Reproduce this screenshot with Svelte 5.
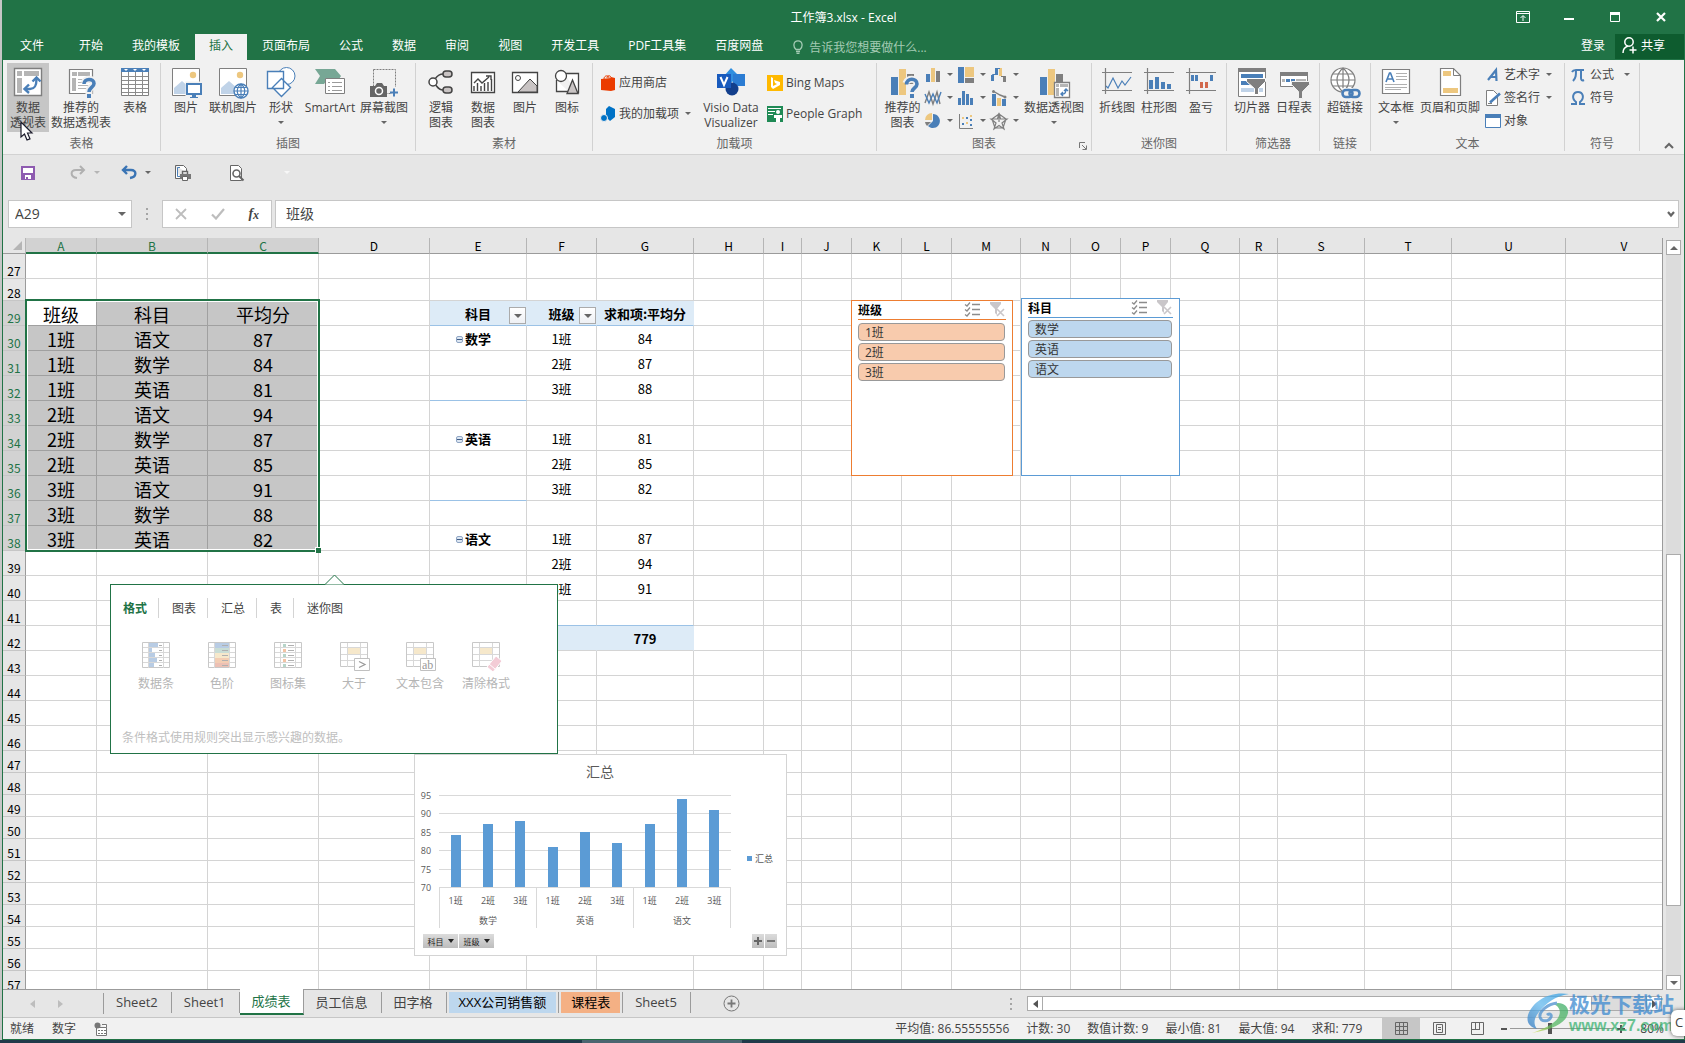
<script lang="ts">
    type Column = { name: string, width: number }
    type Cell = { text?: string, kind?: string, filter?: boolean, toggle?: boolean }
    type Tool = { icon: string, lines: string[], menu?: boolean, active?: boolean }
    type Group = { id: string, label: string, tools: Tool[] }

    const icons: Record<string, string> = {
        pivot: `<path fill="#fff" stroke="#7f7f7f" stroke-width="1.4" d="M2.5 1.5h27v27h-27z"/><path fill="#b5b5b5" d="M5 4h5v5H5zM12 4h15v5H12zM5 11h5v15H5z"/><path fill="none" stroke="#4a7fb8" stroke-width="2.4" d="M14 22h4c5 0 6.500-3 6.500-10"/><path fill="none" stroke="#4a7fb8" stroke-width="2.400" d="M20.500 14.500l4-4 4 4M17 17.500l-4.500 4.500 4.500 4"/>`,
        recpivot: `<path fill="#fff" stroke="#7f7f7f" stroke-width="1.2" d="M4.500 2.500h23v24h-23z"/><path fill="#b5b5b5" d="M7 5h5v4H7zM13 5h12v4H13zM7 11h4v13H7z"/><path stroke="#b5b5b5" d="M13 12.500h12M13 15.500h12M13 18.500h12M13 21.500h12"/><path fill="none" stroke="#f1f1f1" stroke-width="7" d="M19 16c1-5 10-5 10 0 0 4-5 4-5 8v4"/><path fill="none" stroke="#4a7fb8" stroke-width="3.6" d="M19 17c0-6 10-6 10-.5 0 4-5 4-5 8.500"/><path fill="#4a7fb8" d="M22 27h4v4h-4z"/>`,
        table: `<path fill="#fff" stroke="#7f7f7f" d="M2.500 1.500h27v27h-27z"/><path fill="#4a7fb8" d="M2 1h28v4H2z"/><path fill="#fff" d="M5 2h4l-2 2zM14 2h4l-2 2zM23 2h4l-2 2z"/><path stroke="#8c8c8c" d="M9.500 5v24M16.500 5v24M23.500 5v24M3 9.500h26M3 13.500h26M3 17.500h26M3 21.500h26M3 25.500h26"/>`,
        picture: `<path fill="#fff" stroke="#7f7f7f" d="M2.500 1.500h27v27h-27z"/><circle cx="23" cy="8" r="3.200" fill="#edc77f"/><path fill="#c0d3e8" d="M4 27v-6l8-7 8 7v6z"/><path fill="#fff" stroke="#f1f1f1" stroke-width="3" d="M17 16h15v12H17z"/><path fill="#fff" stroke="#4a7fb8" stroke-width="2" d="M17 17h14v10H17z"/><path fill="#4a7fb8" d="M22 28h4v2h-4zM20 30h8v1h-8z"/>`,
        online: `<path fill="#fff" stroke="#7f7f7f" d="M2.500 1.500h27v27h-27z"/><circle cx="23" cy="8" r="3.200" fill="#edc77f"/><path fill="#c0d3e8" d="M4 27v-6l8-7 8 7v6z"/><circle cx="24" cy="24" r="7" fill="#fff" stroke="#4a7fb8" stroke-width="1.400"/><path fill="none" stroke="#4a7fb8" stroke-width="1.200" d="M17 24h14M24 17v14M18.500 20.500h11M18.500 27.500h11M24 17c-5 4-5 10 0 14M24 17c5 4 5 10 0 14"/>`,
        shapes: `<circle cx="21.500" cy="9" r="8.500" fill="#fff" stroke="#4a7fb8"/><path fill="#fff" stroke="#4a7fb8" stroke-width="1.400" d="M2.500 4.500h16v17h-16zM16.500 11.500l9 9-9 9-9-9z"/>`,
        smartart: `<path fill="#77a795" d="M1 2h20l6 7-2 3H14l-4 5H1l5-8z"/><path fill="#fff" stroke="#7f7f7f" d="M11.500 11.500h19v15h-19z"/><path stroke="#9a9a9a" d="M14 15.500h2M18 15.500h10M14 19.500h2M18 19.500h10M14 23.500h2M18 23.500h10"/>`,
        screenshot: `<path fill="none" stroke="#7f7f7f" stroke-dasharray="2 1" d="M5.500 2.500h22v24h-22z"/><path fill="#666" d="M2 19h5l2-3h5l2 3h3v11H2z"/><circle cx="11" cy="24" r="3.500" fill="#666" stroke="#fff" stroke-width="1.500"/><path stroke="#f1f1f1" stroke-width="5" d="M26 20v9"/><path stroke="#4a7fb8" stroke-width="2" d="M22 25.500h8M26 21.500v8"/>`,
        logic: `<g fill="#fff" stroke="#444" stroke-width="1.500"><path fill="none" d="M18 7c-8 0-7 8-13 8 7 0 6 8 13 8"/><circle cx="8" cy="15" r="4"/><rect x="18" y="4" width="9" height="6" rx="3" fill="#c9c4c4"/><rect x="18" y="20" width="9" height="6" rx="3" fill="#c9c4c4"/></g>`,
        datachart: `<path fill="#fff" stroke="#444" stroke-width="1.300" d="M4.500 5.500h23v20h-23z"/><path fill="none" stroke="#444" stroke-width="1.400" d="M7 24v-5M10.500 24v-8M14 24v-5M17.500 24v-8M21 24v-9M24.500 24v-12M7 16l4-4 4 4 7-6M19 9h5v4"/>`,
        pic2: `<path fill="#fff" stroke="#444" stroke-width="1.300" d="M3.500 5.500h25v20h-25z"/><circle cx="9" cy="11" r="2.500" fill="none" stroke="#444"/><path fill="#c9c4c4" stroke="#444" d="M9 25l12-13 7 7v6z"/>`,
        symbols: `<path fill="#fff" stroke="#444" stroke-width="1.300" d="M5.500 13v11.500h12M13 6.500h14.500v20"/><circle cx="10" cy="9" r="5.500" fill="#fff" stroke="#444" stroke-width="1.300"/><path fill="#c9c4c4" stroke="#444" stroke-width="1.300" d="M21.500 13l5.500 13.500H16z"/>`,
        visio: `<path fill="#2f8fe0" d="M16 1l8 8-8 7-7-7z"/><path fill="#2b7cd3" d="M18 7h12v12H18z"/><circle cx="17" cy="22" r="6.500" fill="#123f8c"/><path fill="#185abd" d="M2 7h14v14H2z"/><path fill="none" stroke="#fff" stroke-width="2" d="M5.500 10l3.500 8 3.500-8"/>`,
        recchart: `<path fill="#4a7fb8" d="M4 10h7v18H4z"/><path fill="#edc77f" d="M12 2h7v26h-7z"/><path fill="#7f7f7f" d="M20 7h7v10h-7z"/><path fill="none" stroke="#f1f1f1" stroke-width="7" d="M19 16c1-5 11-5 11 0 0 4-5 4-5 8v6"/><path fill="none" stroke="#4a7fb8" stroke-width="3.600" d="M19.500 17.500c0-7 10.500-7 10.500-.5 0 4-5 4-5 8"/><path fill="#4a7fb8" d="M23 27h4v4h-4z"/>`,
        pivotchart: `<path fill="#4a7fb8" d="M2 10h7v18H2z"/><path fill="#edc77f" d="M10 2h7v26h-7z"/><path fill="#7f7f7f" d="M18 7h7v10h-7z"/><path fill="#fff" stroke="#7f7f7f" stroke-width="1.300" d="M16.500 15.500h15v15h-15z"/><path fill="#b5b5b5" d="M18 17h3v3h-3zM22 17h8v3h-8zM18 21h3v8h-3z"/><path fill="none" stroke="#4a7fb8" stroke-width="1.400" d="M23 27h2c2 0 3-1 3-5M26 24l2-2 2 2M25 25l-2 2 2 2"/>`,
        sparkline: `<path stroke="#7f7f7f" stroke-width="1.200" d="M1 5.500h30M1 23.500h30M4.500 1v26"/><path fill="none" stroke="#4a7fb8" stroke-width="1.200" d="M5 19l2 2 5-10 5 10 4-7 3 4 6-8"/>`,
        sparkcol: `<path stroke="#7f7f7f" stroke-width="1.200" d="M1 5.500h30M1 23.500h30M4.500 1v26"/><path fill="#4a7fb8" d="M6 13h4v9H6zM12 10h4v12h-4zM18 15h4v7h-4zM24 17h4v5h-4z"/>`,
        winloss: `<path stroke="#7f7f7f" stroke-width="1.200" d="M1 5.500h30M1 23.500h30M4.500 1v26"/><path fill="#4a7fb8" d="M6 8h3v6H6zM10 8h3v6h-3zM25 8h3v6h-3z"/><path fill="#d2694c" d="M15 15h3v6h-3zM20 15h3v6h-3z"/>`,
        slicer: `<path fill="#fff" stroke="#7f7f7f" d="M2.500 1.500h27v28h-27z"/><path fill="#7f7f7f" d="M2 1h28v4H2z"/><path fill="#4a7fb8" d="M5 7h22v4H5zM5 14h9v4H5z"/><path fill="#c0d3e8" d="M5 21h22v4H5z"/><path fill="#7f7f7f" stroke="#fff" d="M10.500 11.500h19v3l-7 7v6h-4v-6l-8-7z"/>`,
        timeline: `<path fill="#fff" stroke="#7f7f7f" d="M2.500 5.500h27v14h-27z"/><path fill="#7f7f7f" d="M2 5h28v4H2z"/><path fill="#b5b5b5" d="M4 12h3v3H4zM18 12h10v3H18z"/><path fill="#4a7fb8" d="M8 12h4v3H8zM13 12h4v3h-4z"/><path fill="#7f7f7f" stroke="#f1f1f1" d="M13.500 14.500h18v3l-7 7v7h-4v-7l-7-7z"/>`,
        link: `<g fill="#fff" stroke="#7f7f7f" stroke-width="1.200"><circle cx="14" cy="13" r="12"/><path fill="none" d="M2 13h24M14 1v24M4 7h20M4 19h20M14 1c-8 7-8 17 0 24M14 1c8 7 8 17 0 24"/></g><path fill="#f1f1f1" d="M13 21h19v11H13z"/><g fill="none" stroke="#4a7fb8" stroke-width="2.600"><rect x="13.500" y="23" width="10" height="7" rx="3.500"/><rect x="20.500" y="23" width="10" height="7" rx="3.500"/></g>`,
        textbox: `<path fill="#fff" stroke="#7f7f7f" stroke-width="1.200" d="M2.500 2.500h27v24h-27z"/><path fill="none" stroke="#4a7fb8" stroke-width="1.600" d="M6 15l3.500-9h1l3.500 9M7.500 12h5"/><path stroke="#b0b0b0" d="M16 6.500h11M16 9.500h11M16 12.500h11M5 17.500h22M5 20.500h22M5 22.500h16"/>`,
        header: `<path fill="#fff" stroke="#7f7f7f" stroke-width="1.200" d="M6.500 1.500h13l7 7v20h-20z"/><path fill="none" stroke="#7f7f7f" d="M19.500 1.500v7h7"/><path fill="#edc77f" d="M9 4h8v5H9zM9 21h15v5H9z"/>`,
        store: `<path fill="#eb3c00" d="M1 4l10-1v-1l4 1v12l-4 1-10-1z"/><path fill="none" stroke="#eb3c00" d="M4 4c0-4 5-4 5-1M7 3c0-3 4-3 4 0"/>`,
        addins: `<path fill="#0072c6" d="M9 0l6 3v8l-5 4-4-4V3z"/><circle cx="4" cy="12" r="3.500" fill="#0072c6" stroke="#f1f1f1"/>`,
        bing: `<path fill="#ffb900" d="M0 0h16v16H0z"/><path fill="#fff" d="M4 2l2 1v8l4-2-2-1-1-3 6 2v3l-7 4-2-2z"/>`,
        people: `<path fill="#1f8a55" d="M0 0h16v16H0z"/><path stroke="#fff" d="M1 2.500h13M1 5.500h7M1 8.500h5"/><circle cx="11" cy="6" r="2" fill="#fff"/><path fill="#fff" d="M7 9h8v3h-2v4H9v-4H7z"/>`,
        col: `<path fill="#4a7fb8" d="M1 7h4v8H1z"/><path fill="#edc77f" d="M6 1h4v14H6z"/><path fill="#7f7f7f" d="M11 4h4v11h-4z"/>`,
        tree: `<path fill="#4a7fb8" d="M0 0h6v16H0z"/><path fill="#edc77f" d="M7 0h9v10H7z"/><path fill="#7f7f7f" d="M7 11h9v5H7z"/>`,
        waterfall: `<path fill="#4a7fb8" d="M0 8h3v6H0zM4 1h3v7H4z"/><path fill="#edc77f" d="M8 1h3v8H8z"/><path fill="#7f7f7f" d="M12 9h3v6h-3z"/><path fill="none" stroke="#4a7fb8" d="M1.500 8V7.500h3M5 1.500h4"/><path stroke="#777" d="M10 9.500h4"/>`,
        line: `<path fill="none" stroke="#7f7f7f" stroke-width="1.400" d="M0 13l4-11 4 12 4-12 3 12"/><path fill="none" stroke="#4a7fb8" stroke-width="1.400" d="M0 4l4 9L8 4l4 9 4-11"/>`,
        stat: `<path fill="#4a7fb8" d="M0 8h3v7H0zM4 1h3v14H4zM8 4h3v11H8zM12 8h3v7h-3z"/>`,
        combo: `<path fill="#4a7fb8" d="M1 4h4v12H1z"/><path fill="#edc77f" d="M6 8h4v8H6z"/><path fill="#4a7fb8" d="M11 9h4v7h-4z"/><path fill="none" stroke="#7f7f7f" stroke-width="1.400" d="M2 1l7 4 5 2"/><circle cx="2.500" cy="1.500" r="1.500" fill="#7f7f7f"/><circle cx="14" cy="7" r="1.500" fill="#7f7f7f"/>`,
        pie: `<path fill="#4a7fb8" d="M8 8V1a7 7 0 1 1-5 12z"/><path fill="#edc77f" d="M7 0v7H0a7 7 0 0 1 7-7z"/><path fill="#7f7f7f" d="M0 9h6l-4 4a7 7 0 0 1-2-4z"/>`,
        scatter: `<path fill="none" stroke="#7f7f7f" d="M1.500 1v14.500H15"/><path fill="#4a7fb8" d="M4 10h2v2H4zM8 4h2v2H8zM12 6h2v2h-2zM12 11h2v2h-2z"/><path fill="#edc77f" d="M4 4h2v2H4zM8 9h2v2H8zM12 2h2v2h-2z"/>`,
        radar: `<path fill="none" stroke="#7f7f7f" stroke-width="1.200" d="M8 0l1.500 6 6.500 0-5 4 2 6-5-3.500L3 16l2-6-5-4h6.500zM8 1l7 5-3 9H4L1 6zM8 1v8"/>`,
        wordart: `<path fill="none" stroke="#4a7fb8" stroke-width="2.200" d="M3 13L11 3l.5 11M5.500 10h6"/>`,
        sign: `<path fill="#fff" stroke="#7f7f7f" d="M1.500.5h7l4 4v11h-11z"/><path stroke="#4a7fb8" stroke-width="2.600" d="M5 12.500L15 3.500"/><path stroke="#7f7f7f" d="M3 13.500h4"/>`,
        object: `<path fill="#fff" stroke="#4a7fb8" d="M.5 1.500h15v13H.5z"/><path fill="#4a7fb8" d="M0 1h16v4H0z"/>`,
        pi: `<path fill="none" stroke="#4a7fb8" stroke-width="2" d="M1 5c1-2 2-2 4-2h8M5 3c0 5 0 8-3 11M10 3v8c0 2 1 3 3 2"/>`,
        omega: `<path fill="none" stroke="#4a7fb8" stroke-width="2" d="M0 14h5v-2C0 8 2 2 7 2s7 6 2 10v2h5"/>`,
        save: `<path fill="#8e5bb0" d="M0 1h14v14H0z"/><path fill="#fff" d="M2 3h10v5H2zM4 10h6v4H7v-2H5v2H4z"/>`,
        redo: `<path fill="none" stroke="#b0b0b0" stroke-width="2" d="M6 13c-7-1-7-8-1-8h8M9 1l4 4-4 4"/>`,
        undo: `<path fill="none" stroke="#3a74b4" stroke-width="2.400" d="M8 13c7-1 7-8 1-8H1M5 1L1 5l4 4"/>`,
        print: `<path fill="#fff" stroke="#666" d="M.5.500h8l3 3v4M.5.500v13H5"/><path fill="none" stroke="#4a7fb8" d="M5 2.500H2.500v9H5"/><path fill="#fff" stroke="#666" stroke-width="1.400" d="M7.500 6.500h5v3h-5z"/><path fill="#777" d="M5 9h11v5H5z"/><path fill="#fff" stroke="#666" d="M7.500 11.500h5v4h-5z"/>`,
        preview: `<path fill="#fff" stroke="#666" d="M.5.500h8l3 3v12H.5z"/><circle cx="6.500" cy="8.500" r="3.500" fill="#fff" stroke="#666" stroke-width="1.600"/><path stroke="#666" stroke-width="2" d="M9 11l4.500 4.500"/>`,
        multi: `<path fill="none" stroke="#8c8c8c" stroke-width="1.300" d="M0 2.500l2 1.500 3-3.500M0 7.500l2 1.500 3-3.500M0 12.500l2 1.500 3-3.500M7 2.500h8M7 7.500h8M7 12.500h8"/>`,
        clear: `<path fill="#c9c6c9" d="M0 0h11v2L7 7v6L5 11V7L0 2z"/><path stroke="#c9c6c9" stroke-width="1.600" d="M7 7l7 7M14 7l-7 7"/>`,
    }

    const cells = `<path fill="#fff" stroke="#c8c8c8" d="M.5.500h27v25H.5z"/><path stroke="#d8d8d8" d="M6.500 1v25M21.500 1v25M1 5.500h26M1 10.500h26M1 15.500h26M1 20.500h26"/>`
    const small = `<path fill="#fff" stroke="#c8c8c8" d="M.5.500h27v24H.5z"/><path stroke="#d8d8d8" d="M7.500 1v24M20.500 1v24M1 5.500h26M1 12.500h26M1 18.500h26"/><path fill="#f6e8cb" d="M8 6h12v6H8z"/>`
    const analysis = [
        { label: '数据条', art: cells + `<path fill="#b8cce4" d="M7 1h9v4H7zM7 6h3v4H7zM7 11h6v4H7zM7 16h8v4H7zM7 21h5v4H7z"/><path stroke="#b0b0b0" d="M17 3.500h3M17 8.500h3M17 13.500h3M17 18.500h3M17 23.500h3"/>` },
        { label: '色阶', art: cells + `<path fill="#b8cce4" d="M7 1h14v5H7z"/><path fill="#c9ddd5" d="M7 6h14v5H7z"/><path fill="#f6e8cb" d="M7 11h14v5H7z"/><path fill="#f3cdb3" d="M7 16h14v5H7z"/><path fill="#ecc0b4" d="M7 21h14v4H7z"/><path stroke="#b0b0b0" d="M14 3.500h6M14 8.500h6M14 13.500h6M14 18.500h6M14 23.500h6"/>` },
        { label: '图标集', art: cells + `<path stroke="#b0b0b0" d="M14 3.500h6M14 8.500h6M14 13.500h6M14 18.500h6M14 23.500h6"/><path fill="#b7d5c9" d="M9 2h3v3H9zM9 12h3v3H9zM9 22h3v3H9z"/><path fill="#f3c3a3" d="M9 7h3v3H9zM9 17h3v3H9z"/>` },
        { label: '大于', art: small + `<path fill="#fff" stroke="#c0c0c0" d="M14.500 16.500h15v12h-15z"/><path fill="none" stroke="#999" stroke-width="1.200" d="M19 19.500l6 3-6 3"/>` },
        { label: '文本包含', art: small + `<path fill="#fff" stroke="#c0c0c0" d="M14.500 16.500h15v12h-15z"/><text x="16" y="27" font-size="12" fill="#999" font-family="Liberation Serif">ab</text>` },
        { label: '清除格式', art: small + `<path fill="#f3ccd6" stroke="#fff" d="M15 25l9-11 6 5-9 11z"/><path stroke="#fff" d="M17 22l6 5"/>` },
    ]

    const ribbonTabs = ['文件', '开始', '我的模板', '插入', '页面布局', '公式', '数据', '审阅', '视图', '开发工具', 'PDF工具集', '百度网盘']
    let activeTab = $state('插入')

    const groups: Group[] = [
        { id: 'tables', label: '表格', tools: [
            { icon: 'pivot', lines: ['数据', '透视表'], active: true },
            { icon: 'recpivot', lines: ['推荐的', '数据透视表'] },
            { icon: 'table', lines: ['表格'] },
        ] },
        { id: 'art', label: '插图', tools: [
            { icon: 'picture', lines: ['图片'] },
            { icon: 'online', lines: ['联机图片'] },
            { icon: 'shapes', lines: ['形状'], menu: true },
            { icon: 'smartart', lines: ['SmartArt'] },
            { icon: 'screenshot', lines: ['屏幕截图'], menu: true },
        ] },
        { id: 'material', label: '素材', tools: [
            { icon: 'logic', lines: ['逻辑', '图表'] },
            { icon: 'datachart', lines: ['数据', '图表'] },
            { icon: 'pic2', lines: ['图片'] },
            { icon: 'symbols', lines: ['图标'] },
        ] },
        { id: 'addins', label: '加载项', tools: [{ icon: 'visio', lines: ['Visio Data', 'Visualizer'] }] },
        { id: 'charts', label: '图表', tools: [
            { icon: 'recchart', lines: ['推荐的', '图表'] },
            { icon: 'pivotchart', lines: ['数据透视图'], menu: true },
        ] },
        { id: 'sparks', label: '迷你图', tools: [
            { icon: 'sparkline', lines: ['折线图'] },
            { icon: 'sparkcol', lines: ['柱形图'] },
            { icon: 'winloss', lines: ['盈亏'] },
        ] },
        { id: 'filters', label: '筛选器', tools: [
            { icon: 'slicer', lines: ['切片器'] },
            { icon: 'timeline', lines: ['日程表'] },
        ] },
        { id: 'links', label: '链接', tools: [{ icon: 'link', lines: ['超链接'] }] },
        { id: 'text', label: '文本', tools: [
            { icon: 'textbox', lines: ['文本框'], menu: true },
            { icon: 'header', lines: ['页眉和页脚'] },
        ] },
        { id: 'symbols', label: '符号', tools: [] },
    ]
    const gallery = ['col', 'tree', 'waterfall', 'line', 'stat', 'combo', 'pie', 'scatter', 'radar']

    const columns: Column[] = [
        ['A', 71], ['B', 111], ['C', 111], ['D', 111], ['E', 97], ['F', 70], ['G', 97], ['H', 70],
        ['I', 38], ['J', 50], ['K', 50], ['L', 50], ['M', 69], ['N', 50], ['O', 50], ['P', 50],
        ['Q', 69], ['R', 38], ['S', 87], ['T', 87], ['U', 114], ['V', 117],
    ].map(([name, width]) => ({ name: String(name), width: Number(width) }))
    const rows = Array.from({ length: 31 }, (_, i) => i + 27)

    const scores = [
        ['班级', '科目', '平均分'],
        ['1班', '语文', '87'], ['1班', '数学', '84'], ['1班', '英语', '81'],
        ['2班', '语文', '94'], ['2班', '数学', '87'], ['2班', '英语', '85'],
        ['3班', '语文', '91'], ['3班', '数学', '88'], ['3班', '英语', '82'],
    ]
    const pivot = [
        { subject: '数学', values: [84, 87, 88] },
        { subject: '英语', values: [81, 85, 82] },
        { subject: '语文', values: [87, 94, 91] },
    ]

    const sheet: Record<string, Cell> = {
        E29: { text: '科目', kind: 'head', filter: true },
        F29: { text: '班级', kind: 'head', filter: true },
        G29: { text: '求和项:平均分', kind: 'head' },
        E32: { kind: 'rule' },
        E36: { kind: 'rule' },
        E41: { kind: 'rule' },
        F41: { kind: 'rule' },
        G41: { kind: 'rule' },
        E42: { kind: 'total' },
        F42: { kind: 'total' },
        G42: { text: '779', kind: 'total' },
    }
    scores.forEach((line, r) => line.forEach((text, c) => {
        sheet['ABC'[c] + (29 + r)] = { text, kind: r + c === 0 ? 'score current' : 'score' }
    }))
    pivot.forEach((block, b) => {
        const top = 30 + b * 4
        sheet['E' + top] = { text: block.subject, kind: 'rowfield', toggle: true }
        block.values.forEach((value, i) => {
            sheet['F' + (top + i)] = { text: `${i + 1}班`, kind: 'num' }
            sheet['G' + (top + i)] = { text: String(value), kind: 'num' }
        })
    })

    const slicers = [
        { id: 'class', title: '班级', items: ['1班', '2班', '3班'] },
        { id: 'subject', title: '科目', items: ['数学', '英语', '语文'] },
    ]

    const bars = pivot.flatMap((block) => block.values.map((value, i) => ({ value, label: `${i + 1}班` })))
    const ticks = [95, 90, 85, 80, 75, 70]
    const slot = 291 / 9
    const chartY = (v: number) => Math.round(132 - (v - 70) * 3.68)

    const sheetTabs = [
        { name: 'Sheet2' }, { name: 'Sheet1' }, { name: '成绩表', tone: 'open' }, { name: '员工信息' },
        { name: '田字格' }, { name: 'XXX公司销售额', tone: 'blue' }, { name: '课程表', tone: 'orange' }, { name: 'Sheet5' },
    ]
    const stats = ['平均值: 86.55555556', '计数: 30', '数值计数: 9', '最小值: 81', '最大值: 94', '求和: 779']

    let cellName = $state('A29')
    let formula = $state('班级')
    let zoom = $state(38)
</script>

{#snippet icon(name: string, size = 16)}
    <svg class="icon" width={size} height={size} viewBox="0 0 {size} {size}" aria-hidden="true">{@html icons[name]}</svg>
{/snippet}

{#snippet bigTool(tool: Tool)}
    <button class="tool" class:active={tool.active}>
        {@render icon(tool.icon, 32)}
        {#each tool.lines as line}<span>{line}</span>{/each}
        {#if tool.menu}<i class="caret low"></i>{/if}
    </button>
{/snippet}

{#snippet smallTool(name: string, label: string, menu = false)}
    <button class="small">{@render icon(name)}<span>{label}</span>{#if menu}<i class="caret"></i>{/if}</button>
{/snippet}

<div class="desktop">
    <div class="window">
        <header class="title">
            <h1>工作簿3.xlsx - Excel</h1>
            <div class="controls">
                <button aria-label="功能区显示选项"><svg width="14" height="12" viewBox="0 0 14 12"><path fill="none" stroke="#fff" d="M.5.500h13v11H.5zM1 2.500h12M7 10V5M4.500 7L7 4.500 9.500 7" /></svg></button>
                <button aria-label="最小化"><svg width="10" height="12" viewBox="0 0 10 12"><path fill="#fff" d="M0 7h10v2H0z" /></svg></button>
                <button aria-label="最大化"><svg width="10" height="10" viewBox="0 0 10 10"><path fill="none" stroke="#fff" d="M.5.500h9v9h-9z" /><path fill="#fff" d="M0 0h10v3H0z" /></svg></button>
                <button aria-label="关闭"><svg width="10" height="10" viewBox="0 0 10 10"><path stroke="#fff" stroke-width="2.200" d="M1 1l8 8M9 1L1 9" /></svg></button>
            </div>
        </header>

        <nav class="tabs">
            {#each ribbonTabs as tab}
                <button class:file={tab === '文件'} class:active={tab === activeTab} onclick={() => (activeTab = tab)}>{tab}</button>
            {/each}
            <label class="tell">
                <svg width="10" height="14" viewBox="0 0 10 14"><path fill="none" stroke="#a4cbb4" stroke-width="1.300" d="M3 9.500C0 7 0 .800 5 .800S10 7 7 9.500zM3 11.500h4M3.500 13.300h3" /></svg>
                <input placeholder="告诉我您想要做什么..." aria-label="告诉我您想要做什么" />
            </label>
            <a class="login" href="#login">登录</a>
            <button class="share">
                <svg width="15" height="17" viewBox="0 0 15 17"><g fill="none" stroke="#fff" stroke-width="1.500"><circle cx="7" cy="5" r="4.200" /><path d="M1 16c0-4 2-6 5-7M11 9.500v7M7.500 13h7" /></g></svg>
                共享
            </button>
        </nav>

        <div class="ribbon">
            {#each groups as group}
                <section class="group {group.id}">
                    <div class="body">
                        {#if group.id === 'addins'}
                            <div class="stack wide">
                                {@render smallTool('store', '应用商店')}
                                {@render smallTool('addins', '我的加载项', true)}
                            </div>
                            {@render bigTool(group.tools[0])}
                            <div class="stack wide">
                                {@render smallTool('bing', 'Bing Maps')}
                                {@render smallTool('people', 'People Graph')}
                            </div>
                        {:else if group.id === 'charts'}
                            {@render bigTool(group.tools[0])}
                            <div class="gallery">
                                {#each gallery as name}
                                    <button class="small" aria-label={name}>{@render icon(name)}<i class="caret"></i></button>
                                {/each}
                            </div>
                            {@render bigTool(group.tools[1])}
                        {:else}
                            {#each group.tools as tool}{@render bigTool(tool)}{/each}
                        {/if}
                        {#if group.id === 'text'}
                            <div class="stack">
                                {@render smallTool('wordart', '艺术字', true)}
                                {@render smallTool('sign', '签名行', true)}
                                {@render smallTool('object', '对象')}
                            </div>
                        {:else if group.id === 'symbols'}
                            <div class="stack">
                                {@render smallTool('pi', '公式', true)}
                                {@render smallTool('omega', '符号')}
                            </div>
                        {/if}
                    </div>
                    <h2>{group.label}</h2>
                    {#if group.id === 'charts'}
                        <button class="launcher" aria-label="查看所有图表"><svg width="8" height="8" viewBox="0 0 8 8"><path fill="none" stroke="#777" d="M.5 6V.5H6M3 3l4 4M7.500 3.500v4h-4" /></svg></button>
                    {/if}
                </section>
            {/each}
            <button class="fold" aria-label="折叠功能区"><svg width="10" height="7" viewBox="0 0 10 7"><path fill="none" stroke="#666" stroke-width="2" d="M1 6l4-4 4 4" /></svg></button>
        </div>

        <div class="quick">
            <button class="q-save" aria-label="保存">{@render icon('save')}</button>
            <button class="q-redo" aria-label="恢复">{@render icon('redo')}<i class="caret pale"></i></button>
            <button class="q-undo" aria-label="撤消">{@render icon('undo')}<i class="caret"></i></button>
            <button class="q-print" aria-label="快速打印">{@render icon('print')}</button>
            <button class="q-view" aria-label="打印预览">{@render icon('preview')}</button>
            <button class="q-more" aria-label="自定义快速访问工具栏"><i class="caret white"></i></button>
        </div>

        <div class="formula">
            <div class="namebox">
                <input bind:value={cellName} aria-label="名称框" />
                <button aria-label="名称列表"><i class="caret big"></i></button>
            </div>
            <span class="grip"></span>
            <div class="fx">
                <button aria-label="取消"><svg width="12" height="12" viewBox="0 0 12 12"><path stroke="#bdbdbd" stroke-width="1.800" d="M1 1l10 10M11 1L1 11" /></svg></button>
                <button aria-label="输入"><svg width="14" height="12" viewBox="0 0 14 12"><path fill="none" stroke="#bdbdbd" stroke-width="2.200" d="M1 6.500L5 10.500 13 1" /></svg></button>
                <button class="fn" aria-label="插入函数">f<sub>x</sub></button>
            </div>
            <div class="entry">
                <input bind:value={formula} aria-label="编辑栏" />
                <button aria-label="展开编辑栏"><svg width="8" height="7" viewBox="0 0 8 7"><path fill="none" stroke="#666" stroke-width="2.200" d="M1 1l3 3.500L7 1" /></svg></button>
            </div>
        </div>

        <main class="book">
            <div class="sheet">
                <table>
                    <colgroup>
                        <col class="corner-col" />
                        {#each columns as column}<col style="width: {column.width}px" />{/each}
                    </colgroup>
                    <thead>
                        <tr>
                            <th class="corner"><svg width="9" height="9" viewBox="0 0 9 9"><path fill="#b5b5b5" d="M9 0v9H0z" /></svg></th>
                            {#each columns as column, i}<th class:picked={i < 3}>{column.name}</th>{/each}
                        </tr>
                    </thead>
                    <tbody>
                        {#each rows as row}
                            <tr class:short={row === 28 || row > 46}>
                                <th class:picked={row > 28 && row < 39}>{row}</th>
                                {#each columns as column}
                                    {@const cell = sheet[column.name + row]}
                                    <td class={cell?.kind}>
                                        {#if cell?.toggle}<button class="toggle" aria-label="折叠"></button>{/if}
                                        {cell?.text ?? ''}
                                        {#if cell?.filter}<button class="filter" aria-label="筛选{cell.text}"><i class="caret big"></i></button>{/if}
                                    </td>
                                {/each}
                            </tr>
                        {/each}
                    </tbody>
                </table>

                <div class="selection"><i></i></div>

                {#each slicers as slicer}
                    <section class="slicer {slicer.id}">
                        <header>
                            <h3>{slicer.title}</h3>
                            <button aria-label="多选">{@render icon('multi')}</button>
                            <button aria-label="清除筛选器">{@render icon('clear')}</button>
                        </header>
                        {#each slicer.items as item}<button class="item">{item}</button>{/each}
                    </section>
                {/each}

                <figure class="chart">
                    <svg width="371" height="200" viewBox="0 0 371 200">
                        <text class="chart-title" x="185" y="22">汇总</text>
                        {#each ticks as tick}
                            <line x1="24" x2="316" y1={chartY(tick) + 0.5} y2={chartY(tick) + 0.5} />
                            <text class="tick" x="11" y={chartY(tick) + 4}>{tick}</text>
                        {/each}
                        {#each bars as bar, i}
                            <rect x={Math.round(24.5 + slot * (i + 0.5) - 5)} y={chartY(bar.value)} width="10" height={132 - chartY(bar.value)} />
                            <text x={24.5 + slot * (i + 0.5)} y="149">{bar.label}</text>
                        {/each}
                        {#each pivot as block, i}
                            <text x={24.5 + slot * (i * 3 + 1.5)} y="169">{block.subject}</text>
                        {/each}
                        {#each [24, 121, 218, 315] as x}<line x1={x + 0.5} x2={x + 0.5} y1="132" y2="173" />{/each}
                        <rect x="332" y="101" width="5" height="5" />
                        <text x="349" y="107">汇总</text>
                    </svg>
                    <div class="fields">
                        <button>科目<i class="caret dark"></i></button>
                        <button>班级<i class="caret dark"></i></button>
                        <button class="sign first" aria-label="展开整个字段"><svg width="8" height="8" viewBox="0 0 8 8"><path stroke="#666" stroke-width="2" d="M0 4h8M4 0v8" /></svg></button>
                        <button class="sign" aria-label="折叠整个字段"><svg width="8" height="8" viewBox="0 0 8 8"><path stroke="#777" stroke-width="2" d="M0 4h8" /></svg></button>
                    </div>
                </figure>

                <section class="analysis">
                    <svg class="tip" width="19" height="11" viewBox="0 0 19 11"><path fill="#fff" stroke="#217346" d="M0 10.500L9.500 1l9.500 9.500" /></svg>
                    <div class="kinds">
                        <button class="active">格式</button>
                        <button>图表</button>
                        <button>汇总</button>
                        <button>表</button>
                        <button>迷你图</button>
                    </div>
                    <div class="choices">
                        {#each analysis as choice}
                            <button>
                                <svg width="28" height="30" viewBox="0 0 28 30">{@html choice.art}</svg>
                                {choice.label}
                            </button>
                        {/each}
                    </div>
                    <p>条件格式使用规则突出显示感兴趣的数据。</p>
                </section>
            </div>

            <div class="vscroll">
                <button aria-label="向上滚动"><i class="caret up"></i></button>
                <div class="track"><div class="thumb"></div></div>
                <button aria-label="向下滚动"><i class="caret big"></i></button>
            </div>
        </main>

        <div class="sheets">
            <div class="arrows">
                <button aria-label="上一张工作表"><svg width="5" height="8" viewBox="0 0 5 8"><path fill="#bdbdbd" d="M5 0v8L0 4z" /></svg></button>
                <button aria-label="下一张工作表"><svg width="5" height="8" viewBox="0 0 5 8"><path fill="#bdbdbd" d="M0 0v8l5-4z" /></svg></button>
            </div>
            {#each sheetTabs as tab}<button class="sheet-tab {tab.tone ?? ''}"><span>{tab.name}</span></button>{/each}
            <button class="add" aria-label="新工作表"><svg width="17" height="17" viewBox="0 0 17 17"><circle cx="8.500" cy="8.500" r="7.500" fill="none" stroke="#777" /><path stroke="#777" stroke-width="1.800" d="M4.500 8.500h8M8.500 4.500v8" /></svg></button>
            <span class="grip"></span>
            <div class="hscroll">
                <button aria-label="向左滚动"><svg width="5" height="8" viewBox="0 0 5 8"><path fill="#555" d="M5 0v8L0 4z" /></svg></button>
                <div class="track"><div class="thumb"></div></div>
                <button aria-label="向右滚动"><svg width="5" height="8" viewBox="0 0 5 8"><path fill="#555" d="M0 0v8l5-4z" /></svg></button>
            </div>
        </div>

        <footer class="status">
            <span>就绪</span>
            <span>数字</span>
            <svg width="13" height="14" viewBox="0 0 13 14"><path fill="#fff" stroke="#777" d="M2.500 5.500h10v8h-10zM8 2.500h4.500v3" /><circle cx="3.500" cy="3.500" r="3" fill="#777" /><path stroke="#777" stroke-dasharray="2 1" d="M4 8.500h8M4 11.500h8" /></svg>
            <div class="stats">{#each stats as stat}<span>{stat}</span>{/each}</div>
            <div class="views">
                <button class="active" aria-label="普通"><svg width="13" height="13" viewBox="0 0 13 13"><path fill="none" stroke="#666" d="M.5.500h12v12H.5zM4.500 0v13M8.500 0v13M0 4.500h13M0 8.500h13" /></svg></button>
                <button aria-label="页面布局"><svg width="13" height="13" viewBox="0 0 13 13"><path fill="none" stroke="#666" d="M.5.500h12v12H.5zM3.500 2.500h6v8h-6zM5 5.500h3M5 7.500h3" /></svg></button>
                <button aria-label="分页预览"><svg width="13" height="13" viewBox="0 0 13 13"><path fill="none" stroke="#666" d="M.5.500h12v12H.5zM4.500 1v6M8.500 1v6M1 7.500h8" /></svg></button>
            </div>
            <div class="zoom">
                <button aria-label="缩小"><svg width="6" height="6" viewBox="0 0 6 6"><path stroke="#555" stroke-width="2" d="M0 3h6" /></svg></button>
                <input type="range" min="0" max="100" bind:value={zoom} aria-label="显示比例" />
                <button aria-label="放大"><svg width="8" height="8" viewBox="0 0 8 8"><path stroke="#555" stroke-width="2" d="M0 4h8M4 0v8" /></svg></button>
                <span>80%</span>
            </div>
        </footer>
    </div>
    <div class="taskbar"><i></i></div>

    <svg class="pointer" width="14" height="20" viewBox="0 0 14 20"><path fill="#fff" stroke="#1b1b2b" stroke-width="1.200" d="M1 1v15l3.500-3 2.500 6 3-1.200-2.500-5.800H12z" /></svg>

    <div class="brand">
        <svg width="42" height="42" viewBox="0 0 42 42">
            <defs>
                <linearGradient id="sky" x1="1" y1="0" x2="0" y2="1"><stop offset="0" stop-color="#2f9be0" /><stop offset="0.500" stop-color="#63b9ee" /><stop offset="1" stop-color="#2c74bd" /></linearGradient>
                <linearGradient id="leaf" x1="1" y1="0" x2="0" y2="1"><stop offset="0" stop-color="#3fae6b" /><stop offset="0.600" stop-color="#5aba62" /><stop offset="1" stop-color="#dfe24a" /></linearGradient>
            </defs>
            <path fill="url(#sky)" d="M42 2C22-1 6 9 1 23c-2 8 2 12 9 14-4-5-3-11 2-17C19 11 28 4 42 2z" />
            <path fill="url(#leaf)" d="M26 12c9-3 16 2 15 9C39 31 27 37 5 41c12-4 22-9 26-15 4-7 1-12-5-14z" />
            <path fill="none" stroke="#4b90cf" stroke-width="3" d="M30 11c-9 1-18 8-17 14 1 5 9 5 11 0 1-3-2-4-4-2" />
        </svg>
        <div><strong>极光下载站</strong><em>www.xz7.com</em></div>
    </div>
    <div class="bubble">C</div>
</div>

<style>
    :global(body) {
        background: #c6c6c6;
    }

    .desktop {
        position: relative;
        display: flex;
        flex-direction: column;
        height: 100vh;
        overflow: hidden;
        font: 12px/15px "Open Sans", "Noto Sans CJK SC", sans-serif;
        color: #444;
        box-sizing: border-box;
        padding-left: 2px;
    }

    .desktop :global(*) {
        box-sizing: border-box;
    }

    button, input {
        margin: 0;
        padding: 0;
        border: 0;
        background: none;
        font: inherit;
        color: inherit;
        outline: none;
    }

    button {
        display: flex;
        align-items: center;
        justify-content: center;
    }

    svg {
        display: block;
        flex: none;
    }

    h1, h2, h3, p, figure {
        margin: 0;
        font: inherit;
    }

    .icon, .choices svg {
        overflow: visible;
    }

    .caret {
        flex: none;
        width: 0;
        height: 0;
        border: 3px solid transparent;
        border-top-color: #666;
        border-bottom-width: 0;
    }

    .caret.big {
        border-width: 4px 4px 0;
    }

    .caret.up {
        border: 4px solid transparent;
        border-top-width: 0;
        border-bottom-color: #666;
    }

    .caret.pale {
        border-top-color: #b5b5b5;
    }

    .caret.white {
        border-top-color: #f7f7f7;
    }

    .caret.dark {
        border-width: 4px 3px 0;
        border-top-color: #222;
    }

    .window {
        flex: 1;
        min-height: 0;
        display: flex;
        flex-direction: column;
        background: #e6e6e6;
        border: solid #217346;
        border-width: 0 1px 1px;
    }

    .title {
        display: flex;
        align-items: center;
        justify-content: center;
        height: 34px;
        background: #217346;
        color: #fff;
        position: relative;
    }

    .controls {
        position: absolute;
        right: 0;
        display: flex;
    }

    .controls button {
        width: 46px;
        height: 34px;
    }

    .tabs {
        display: flex;
        height: 26px;
        padding-left: 3px;
        gap: 1px;
        background: #217346;
        color: #fff;
    }

    .tabs button {
        padding: 0 14px 3px;
    }

    .tabs .file {
        margin-right: 6px;
    }

    .tabs .active {
        background: #f1f1f1;
        color: #217346;
    }

    .tell {
        flex: 1;
        display: flex;
        align-items: center;
        gap: 6px;
        padding-left: 15px;
    }

    .tell input {
        width: 160px;
    }

    .tell input::placeholder {
        color: #a4cbb4;
        opacity: 1;
    }

    .login {
        align-self: center;
        margin-right: 9px;
        padding-bottom: 3px;
        color: #fff;
        text-decoration: none;
    }

    .tabs .share {
        width: 69px;
        height: 25px;
        padding: 0 0 2px 7px;
        gap: 4px;
        justify-content: flex-start;
        background: #0e5c2f;
    }

    .ribbon {
        display: flex;
        height: 95px;
        padding: 3px 0;
        background: #f1f1f1;
        border-bottom: 1px solid #d2d2d2;
    }

    .group {
        position: relative;
        flex: none;
        border-right: 1px solid #d2d2d2;
    }

    .body {
        display: grid;
        grid-auto-flow: column;
        justify-content: start;
        height: 69px;
        padding-left: 4px;
    }

    .group h2 {
        margin-top: 5px;
        line-height: 14px;
        text-align: center;
        color: #666;
    }

    .tables { width: 158px; }
    .tables .body { grid-template-columns: 42px 62px 44px; gap: 1px; }
    .art { width: 255px; }
    .art .body { grid-template-columns: 46px 48px 48px 50px 58px; padding-left: 2px; }
    .material { width: 177px; }
    .addins { width: 284px; }
    .addins .body { grid-template-columns: 99px 68px auto; padding-left: 5px; }
    .charts { width: 215px; }
    .charts .body { grid-template-columns: 45px 99px 60px; padding-left: 3px; }
    .sparks { width: 135px; }
    .filters { width: 93px; }
    .links { width: 51px; }
    .text { width: 194px; }
    .text .body { grid-template-columns: 42px 66px auto; }
    .symbols { width: 75px; }

    .material .body, .sparks .body, .filters .body, .links .body {
        grid-auto-columns: 42px;
    }

    .tool {
        flex-direction: column;
        justify-content: flex-start;
        padding-top: 4px;
        white-space: nowrap;
    }

    .tool .icon {
        margin-bottom: 1px;
    }

    .tool span {
        line-height: 15px;
    }

    .tool.active {
        background: #c6c6c6;
    }

    .low {
        margin-top: 6px;
    }

    .stack {
        display: flex;
        flex-direction: column;
        padding-left: 2px;
    }

    .small {
        height: 23px;
        gap: 3px;
        justify-content: flex-start;
        white-space: nowrap;
    }

    .small .caret {
        margin-left: 3px;
    }

    .symbols .caret {
        margin-left: 7px;
    }

    .stack.wide {
        padding-top: 4px;
    }

    .stack.wide .small {
        height: 31px;
    }

    .gallery {
        display: grid;
        grid-template-columns: repeat(3, 33px);
        align-content: start;
    }

    .launcher {
        position: absolute;
        right: 4px;
        bottom: 1px;
    }

    .fold {
        margin: 0 10px 2px auto;
        align-self: flex-end;
    }

    .quick {
        display: flex;
        align-items: center;
        height: 35px;
        margin-bottom: 10px;
        padding-left: 18px;
    }

    .quick button {
        height: 24px;
        gap: 7px;
        justify-content: flex-start;
    }

    .q-save { width: 50px; }
    .q-redo { width: 51px; }
    .q-undo { width: 53px; }
    .q-print { width: 55px; }
    .q-view { width: 54px; }

    .formula {
        display: flex;
        height: 28px;
        margin-bottom: 10px;
        padding: 0 5px;
        font-size: 14px;
    }

    .namebox, .fx, .entry {
        display: flex;
        align-items: center;
        background: #fff;
        border: 1px solid #c6c6c6;
    }

    .namebox {
        width: 124px;
        padding: 0 5px 0 6px;
    }

    .namebox input, .entry input {
        flex: 1;
        min-width: 0;
        padding-bottom: 2px;
    }

    .grip {
        width: 2px;
        height: 12px;
        align-self: center;
        background: repeating-linear-gradient(#a5a5a5 0 2px, transparent 2px 5px);
    }

    .formula .grip {
        margin: 0 14px;
    }

    .fx {
        width: 110px;
        justify-content: space-around;
    }

    .fn {
        font: italic bold 14px "Liberation Serif", serif;
    }

    .fn sub {
        font-size: 12px;
        margin-top: 3px;
    }

    .entry {
        flex: 1;
        margin-left: 3px;
        padding: 0 3px 0 10px;
    }

    .book {
        flex: 1;
        min-height: 0;
        display: flex;
    }

    .sheet {
        position: relative;
        flex: 1;
        min-width: 0;
        overflow: hidden;
        background: #fff;
        border: solid #9b9b9b;
        border-width: 0 1px 1px 0;
    }

    table {
        table-layout: fixed;
        width: 1px;
        border-collapse: separate;
        border-spacing: 0;
        font-family: "Noto Sans CJK SC", sans-serif;
        font-size: 13px;
        color: #000;
    }

    .corner-col {
        width: 23px;
    }

    th {
        padding: 0;
        background: #e6e6e6;
        font-weight: normal;
        font-size: 12px;
        line-height: 14px;
    }

    thead th {
        height: 16px;
        border-right: 1px solid #b5b5b5;
        border-bottom: 1px solid #9b9b9b;
    }

    .corner {
        padding-left: 10px;
    }

    tbody th {
        height: 25px;
        vertical-align: bottom;
        border-right: 1px solid #9b9b9b;
        border-bottom: 1px solid #c6c6c6;
    }

    th.picked {
        background: #d2d2d2;
        color: #217346;
    }

    thead .picked {
        border-bottom: 2px solid #217346;
        line-height: 13px;
    }

    td {
        position: relative;
        height: 25px;
        padding: 2px 0 0;
        line-height: 22px;
        text-align: center;
        white-space: nowrap;
        border: solid #d4d4d4;
        border-width: 0 1px 1px 0;
    }

    .short th, .short td {
        height: 22px;
        line-height: 14px;
    }

    .score {
        font-size: 18px;
        background: #c6c6c6;
        border-color: #a0a0a0;
    }

    .score.current {
        background: #fff;
    }

    .head {
        font-weight: bold;
        background: #ddebf7;
        border-right-color: #ddebf7;
        border-bottom-color: #9bc2e6;
    }

    .rule {
        border-bottom-color: #9bc2e6;
    }

    .total {
        font-weight: bold;
        background: #ddebf7;
        border-right-color: #ddebf7;
    }

    .rowfield {
        font-weight: bold;
    }

    .toggle {
        position: absolute;
        left: 26px;
        top: 10px;
        width: 7px;
        height: 7px;
        border: 1px solid #8fa5c4;
        border-radius: 2px;
        background: linear-gradient(#dce6f2 2px, #3c5a86 2px 3px, #dce6f2 3px);
    }

    .filter {
        position: absolute;
        right: 0;
        bottom: 1px;
        width: 17px;
        height: 17px;
        border: 1px solid #ababab;
        background: linear-gradient(#fff, #eef0f4);
    }

    .selection {
        position: absolute;
        left: 22px;
        top: 61px;
        width: 295px;
        height: 253px;
        border: 2px solid #217346;
        box-shadow: inset 0 0 0 1px #fff;
        pointer-events: none;
    }

    .selection i {
        position: absolute;
        right: -3px;
        bottom: -3px;
        width: 6px;
        height: 6px;
        background: #217346;
        border: solid #fff;
        border-width: 1px 0 0 1px;
    }

    .slicer {
        position: absolute;
        display: flex;
        flex-direction: column;
        gap: 2px;
        padding: 0 7px 0 6px;
        background: #fff;
        border: 1px solid #ed7d31;
        color: #333;
    }

    .slicer.class {
        left: 848px;
        top: 62px;
        width: 162px;
        height: 176px;
    }

    .slicer.subject {
        left: 1018px;
        top: 60px;
        width: 159px;
        height: 178px;
        border-color: #5b9bd5;
    }

    .slicer header {
        display: flex;
        align-items: center;
        gap: 9px;
        height: 19px;
        margin-bottom: 1px;
        margin-right: -1px;
        border-bottom: 1px solid #ed7d31;
    }

    .slicer.subject header {
        margin-bottom: 0;
        border-color: #5b9bd5;
    }

    .slicer h3 {
        flex: 1;
        font-weight: bold;
        color: #000;
    }

    .item {
        height: 18px;
        justify-content: flex-start;
        padding-left: 6px;
        border: 1px solid #999;
        border-radius: 4px;
        background: #f8cbad;
    }

    .slicer.subject .item {
        background: #bdd7ee;
    }

    .chart {
        position: absolute;
        left: 411px;
        top: 516px;
        width: 373px;
        height: 202px;
        background: #fff;
        border: 1px solid #d4d4d4;
    }

    .chart line {
        stroke: #d9d9d9;
    }

    .chart rect {
        fill: #5b9bd5;
    }

    .chart text {
        font-size: 9px;
        text-anchor: middle;
        fill: #595959;
    }

    .chart .chart-title {
        font-size: 14px;
    }

    .fields {
        position: absolute;
        left: 8px;
        right: 9px;
        bottom: 7px;
        display: flex;
        gap: 1px;
        font-size: 8px;
        color: #222;
    }

    .fields button {
        width: 35px;
        height: 14px;
        gap: 4px;
        background: linear-gradient(#dcdcdc, #bdbdbd);
    }

    .fields .sign {
        width: 12px;
    }

    .fields .first {
        margin-left: auto;
    }

    .analysis {
        position: absolute;
        left: 107px;
        top: 346px;
        width: 448px;
        height: 170px;
        padding: 13px 0 0;
        background: #fff;
        border: 1px solid #217346;
    }

    .tip {
        position: absolute;
        left: 214px;
        top: -11px;
    }

    .kinds {
        display: flex;
    }

    .kinds button {
        height: 20px;
        padding: 0 11px 0 13px;
        border-right: 1px solid #d4d4d4;
    }

    .kinds button:last-child {
        border-right: 0;
    }

    .kinds .active {
        padding-left: 12px;
        font-weight: bold;
        color: #217346;
    }

    .choices {
        display: grid;
        grid-template-columns: repeat(6, 66px);
        padding: 24px 0 0 12px;
        color: #b5b5b5;
    }

    .choices button {
        flex-direction: column;
        gap: 4px;
    }

    .analysis p {
        margin: 39px 0 0 11px;
        color: #c0c0c0;
    }

    .vscroll {
        display: flex;
        flex-direction: column;
        width: 21px;
        padding: 2px 3px 0;
    }

    .vscroll button {
        height: 15px;
        background: #fff;
        border: 1px solid #ababab;
    }

    .vscroll .track {
        flex: 1;
        display: flex;
        flex-direction: column;
        justify-content: flex-end;
        padding-bottom: 69px;
        background: #dcdcdc;
    }

    .vscroll .thumb {
        height: 54%;
        background: #fff;
        border: 1px solid #ababab;
    }

    .sheets {
        display: flex;
        height: 27px;
        font-size: 13px;
    }

    .arrows {
        display: flex;
        align-items: center;
        gap: 23px;
        width: 101px;
        padding-left: 27px;
        border-right: 1px solid #9b9b9b;
        margin: 3px 0;
    }

    .sheet-tab {
        height: 21px;
        margin: 2px 0 0;
        padding: 0 13px 0 12px;
        border-right: 1px solid #9b9b9b;
    }

    .sheet-tab.open {
        height: 26px;
        margin: -1px 0 0;
        padding: 0 12px;
        color: #217346;
        background: #fff;
        border-bottom: 2px solid #217346;
        position: relative;
    }

    .sheet-tab.blue, .sheet-tab.orange {
        padding: 0 2px;
        color: #000;
    }

    .blue span, .orange span {
        padding: 1px 10px;
        line-height: 19px;
        background: #bdd7ee;
    }

    .orange span {
        background: #f4b084;
    }

    .add {
        margin-left: 32px;
    }

    .sheets .grip {
        margin-left: auto;
        margin-right: 15px;
    }

    .hscroll {
        display: flex;
        width: 635px;
        height: 15px;
        margin: 6px 22px 0 0;
        border: 1px solid #ababab;
        background: #dcdcdc;
    }

    .hscroll button {
        width: 14px;
        background: #fff;
    }

    .hscroll .track {
        flex: 1;
        border: solid #ababab;
        border-width: 0 1px;
    }

    .hscroll .thumb {
        width: 91%;
        height: 100%;
        background: #fff;
        border-right: 1px solid #ababab;
    }

    .status {
        display: flex;
        align-items: center;
        height: 22px;
        padding: 0 20px 0 7px;
        gap: 18px;
        background: #f1f1f1;
        border-top: 1px solid #c6c6c6;
    }

    .stats {
        display: flex;
        gap: 17px;
        margin-left: auto;
        padding-right: 2px;
    }

    .views {
        display: flex;
    }

    .views button {
        width: 38px;
        height: 21px;
    }

    .views .active {
        background: #c6c6c6;
    }

    .zoom {
        display: flex;
        align-items: center;
        gap: 3px;
        margin-left: -13px;
    }

    .zoom span {
        margin-left: 12px;
    }

    .zoom input {
        appearance: none;
        width: 104px;
        height: 12px;
        background: linear-gradient(#999, #999) center / 100% 1px no-repeat;
    }

    .zoom input::-webkit-slider-thumb {
        appearance: none;
        width: 4px;
        height: 11px;
        background: #555;
    }

    .taskbar {
        height: 3px;
        margin-left: -2px;
        padding-left: 582px;
        background: #203a4a;
    }

    .taskbar i {
        display: block;
        width: 160px;
        height: 3px;
        background: #4b6570;
    }

    .pointer {
        position: absolute;
        left: 20px;
        top: 121px;
    }

    .brand {
        position: absolute;
        right: 11px;
        bottom: 7px;
        display: flex;
        opacity: 0.75;
        pointer-events: none;
    }

    .brand div {
        display: flex;
        flex-direction: column;
    }

    .brand strong {
        font-size: 21px;
        line-height: 24px;
        color: #3d8ad0;
    }

    .brand em {
        font: bold 16px/20px "Liberation Sans", sans-serif;
        color: #3cb371;
    }

    .bubble {
        position: absolute;
        right: -13px;
        bottom: 7px;
        width: 27px;
        height: 26px;
        padding: 5px 4px;
        font-size: 13px;
        background: #fff;
        border-radius: 6px;
        box-shadow: 0 0 4px #555;
    }
</style>
